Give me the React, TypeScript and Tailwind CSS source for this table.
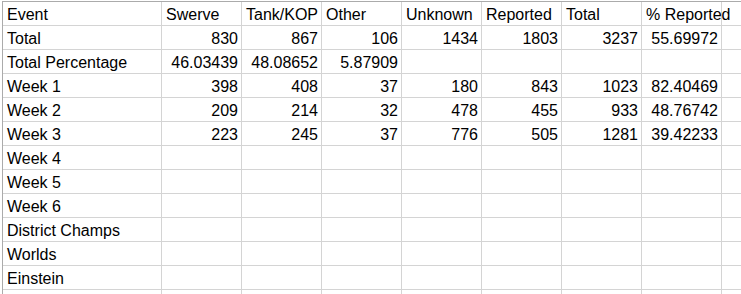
import React from "react";

const headers = ["Event", "Swerve", "Tank/KOP", "Other", "Unknown", "Reported", "Total", "% Reported", ""];

const rows: string[][] = [
  ["Total", "830", "867", "106", "1434", "1803", "3237", "55.69972", ""],
  ["Total Percentage", "46.03439", "48.08652", "5.87909", "", "", "", "", ""],
  ["Week 1", "398", "408", "37", "180", "843", "1023", "82.40469", ""],
  ["Week 2", "209", "214", "32", "478", "455", "933", "48.76742", ""],
  ["Week 3", "223", "245", "37", "776", "505", "1281", "39.42233", ""],
  ["Week 4", "", "", "", "", "", "", "", ""],
  ["Week 5", "", "", "", "", "", "", "", ""],
  ["Week 6", "", "", "", "", "", "", "", ""],
  ["District Champs", "", "", "", "", "", "", "", ""],
  ["Worlds", "", "", "", "", "", "", "", ""],
  ["Einstein", "", "", "", "", "", "", "", ""],
  ["", "", "", "", "", "", "", "", ""],
];

function Cell({ text, first, right }: { text: string; first?: boolean; right?: boolean }) {
  return (
    <div
      className={
        (first ? "w-[159px] " : "w-[80px] ") +
        "h-[24px] shrink-0 border-r border-b border-[#d4d4d4] whitespace-nowrap overflow-visible pt-[2px] leading-[21px] " +
        (right ? "text-right pr-[3px]" : "text-left pl-[4px]")
      }
    >
      {text}
    </div>
  );
}

export default function App() {
  return (
    <div
      className="w-[741px] h-[294px] overflow-hidden bg-white pt-[1px] pl-[2px] text-black text-[16px]"
      style={{ fontFamily: '"Liberation Sans", Arial, sans-serif' }}
    >
      <div className="border-t border-l border-[#ababab] w-max">
        <div className="flex">
          {headers.map((h, i) => (
            <Cell key={i} text={h} first={i === 0} />
          ))}
        </div>
        {rows.map((r, ri) => (
          <div className="flex" key={ri}>
            {r.map((c, ci) => (
              <Cell key={ci} text={c} first={ci === 0} right={ci > 0} />
            ))}
          </div>
        ))}
      </div>
    </div>
  );
}
